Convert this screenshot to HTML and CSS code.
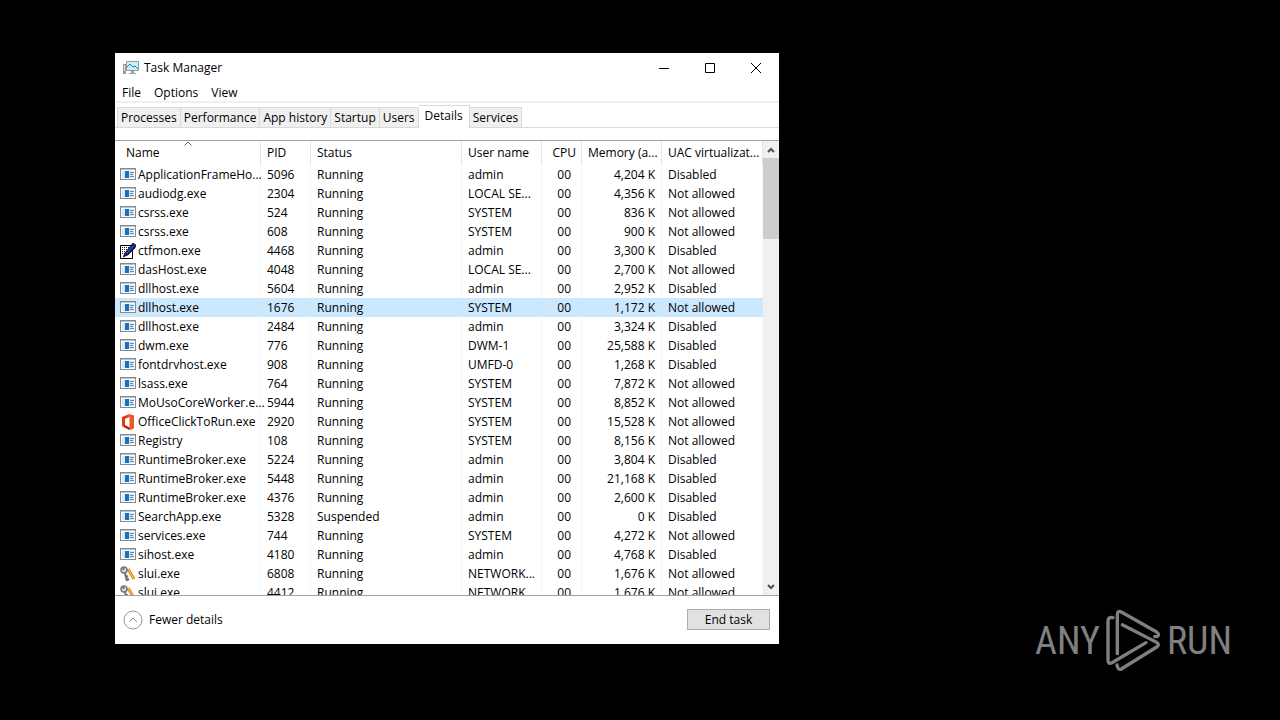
FILE: index.html
```
<!DOCTYPE html>
<html lang="en">
<head>
    <meta charset="UTF-8">
    <meta name="viewport" content="width=device-width, initial-scale=1.0">
    <title>Task Manager</title>
    <link rel="stylesheet" href="styles.css">
</head>
<body>

    <!-- process icons -->
    <svg class="sprite" aria-hidden="true">
        <symbol id="exe" viewBox="0 0 16 12">
            <path fill="#808a8f" d="M0 0h16v12H0z"/>
            <path fill="#fff" d="M1 2h14v9H1z"/>
            <path fill="#b9c3c8" d="M1 1h14v1H1z"/>
            <path fill="#dfe7ec" d="M2 3h12v7H2z"/>
            <path fill="#1a6fc0" d="M5 3h4v7H5z"/>
            <path stroke="#4b93cf" d="M10 4.500h4M10 6.500h3M10 8.500h4"/>
        </symbol>
        <symbol id="pen" viewBox="0 0 16 16">
            <path fill="#fff" stroke="#000" d="M.5 2.500h12v13H.5z"/>
            <path stroke="#222" stroke-dasharray="1 1" d="M2 4.500h9M2 6.500h8M2 8.500h6M2 10.500h4"/>
            <path fill="#0c1a72" stroke="#000" stroke-width=".6" d="M13 0l3 2-1 3-7 7-5 2 2-4z"/>
            <path stroke="#4d74d8" d="M6.500 10.500l7-8"/>
        </symbol>
        <symbol id="office" viewBox="0 0 16 16">
            <path fill="#e43a12" d="M9.500 0L2 3v9l3-1V4.700L9.500 3z"/>
            <path fill="#b81d14" d="M2 12l7.500 4v-2.500L5 11z"/>
            <path fill="#f0562a" d="M9.500 0L14 1.500v13L9.500 16z"/>
            <path fill="#c9260f" d="M2 12l7.500 1.500V16z"/>
        </symbol>
        <symbol id="keys" viewBox="0 0 16 16">
            <path fill="none" stroke="#d18a1c" stroke-width="3" d="M8 3l6 10"/>
            <path fill="none" stroke="#f6c763" d="M8 3l6 10"/>
            <circle cx="4" cy="4" r="3" fill="#ddd" stroke="#777" stroke-width="1.500"/>
            <circle cx="3.500" cy="3" r="1" fill="#555"/>
            <path fill="none" stroke="#6d6d72" stroke-width="2" d="M5 7l2 8M6 11l2-1M7 14l2-1"/>
        </symbol>
    </svg>

    <main class="window">
        <header class="titlebar">
            <svg class="app-icon" viewBox="0 0 16 14" aria-hidden="true">
                <path fill="#9a9a9a" d="M0 3h3v10H0z"/>
                <path fill="#ddd" d="M1 4h1v6H1z"/>
                <path fill="#d3ecfa" stroke="#8c9aa3" d="M3.500.5h12v9h-12z"/>
                <path fill="none" stroke="#1783c4" d="M4 6l3-3 3 3 2-1 3 3"/>
                <path fill="#9aa4aa" d="M8 10h3v2h2v1H6v-1h2z"/>
            </svg>
            <h1 class="title">Task Manager</h1>
            <button class="win-btn" aria-label="Minimize"><svg viewBox="0 0 12 12"><path d="M1 6.500h10"/></svg></button>
            <button class="win-btn" aria-label="Maximize"><svg viewBox="0 0 12 12"><path d="M1.500 1.500h9v9h-9z"/></svg></button>
            <button class="win-btn" aria-label="Close"><svg viewBox="0 0 12 12"><path d="M1 1l10 10M11 1L1 11"/></svg></button>
        </header>

        <nav class="menu">
            <button>File</button>
            <button>Options</button>
            <button>View</button>
        </nav>

        <div class="tabs" role="tablist">
            <button class="tab" role="tab">Processes</button>
            <button class="tab" role="tab">Performance</button>
            <button class="tab" role="tab">App history</button>
            <button class="tab" role="tab">Startup</button>
            <button class="tab" role="tab">Users</button>
            <button class="tab active" role="tab" aria-selected="true">Details</button>
            <button class="tab" role="tab">Services</button>
        </div>

        <section class="list">
            <table class="processes">
                <colgroup>
                    <col class="c-name">
                    <col class="c-pid">
                    <col class="c-status">
                    <col class="c-user">
                    <col class="c-cpu">
                    <col class="c-mem">
                    <col>
                </colgroup>
                <thead>
                    <tr>
                        <th class="sorted">Name<svg class="sort" viewBox="0 0 8 5" aria-hidden="true"><path d="M.5 4.500L4 1l3.500 3.500"/></svg></th>
                        <th>PID</th>
                        <th>Status</th>
                        <th>User name</th>
                        <th class="num">CPU</th>
                        <th class="num">Memory (a...</th>
                        <th>UAC virtualizat...</th>
                    </tr>
                </thead>
                <tbody>
                    <tr><td><svg><use href="#exe"/></svg>ApplicationFrameHo...</td><td>5096</td><td>Running</td><td>admin</td><td class="cpu">00</td><td class="num">4,204 K</td><td>Disabled</td></tr>
                    <tr><td><svg><use href="#exe"/></svg>audiodg.exe</td><td>2304</td><td>Running</td><td>LOCAL SE...</td><td class="cpu">00</td><td class="num">4,356 K</td><td>Not allowed</td></tr>
                    <tr><td><svg><use href="#exe"/></svg>csrss.exe</td><td>524</td><td>Running</td><td>SYSTEM</td><td class="cpu">00</td><td class="num">836 K</td><td>Not allowed</td></tr>
                    <tr><td><svg><use href="#exe"/></svg>csrss.exe</td><td>608</td><td>Running</td><td>SYSTEM</td><td class="cpu">00</td><td class="num">900 K</td><td>Not allowed</td></tr>
                    <tr><td><svg class="big"><use href="#pen"/></svg>ctfmon.exe</td><td>4468</td><td>Running</td><td>admin</td><td class="cpu">00</td><td class="num">3,300 K</td><td>Disabled</td></tr>
                    <tr><td><svg><use href="#exe"/></svg>dasHost.exe</td><td>4048</td><td>Running</td><td>LOCAL SE...</td><td class="cpu">00</td><td class="num">2,700 K</td><td>Not allowed</td></tr>
                    <tr><td><svg><use href="#exe"/></svg>dllhost.exe</td><td>5604</td><td>Running</td><td>admin</td><td class="cpu">00</td><td class="num">2,952 K</td><td>Disabled</td></tr>
                    <tr class="selected"><td><svg><use href="#exe"/></svg>dllhost.exe</td><td>1676</td><td>Running</td><td>SYSTEM</td><td class="cpu">00</td><td class="num">1,172 K</td><td>Not allowed</td></tr>
                    <tr><td><svg><use href="#exe"/></svg>dllhost.exe</td><td>2484</td><td>Running</td><td>admin</td><td class="cpu">00</td><td class="num">3,324 K</td><td>Disabled</td></tr>
                    <tr><td><svg><use href="#exe"/></svg>dwm.exe</td><td>776</td><td>Running</td><td>DWM-1</td><td class="cpu">00</td><td class="num">25,588 K</td><td>Disabled</td></tr>
                    <tr><td><svg><use href="#exe"/></svg>fontdrvhost.exe</td><td>908</td><td>Running</td><td>UMFD-0</td><td class="cpu">00</td><td class="num">1,268 K</td><td>Disabled</td></tr>
                    <tr><td><svg><use href="#exe"/></svg>lsass.exe</td><td>764</td><td>Running</td><td>SYSTEM</td><td class="cpu">00</td><td class="num">7,872 K</td><td>Not allowed</td></tr>
                    <tr><td><svg><use href="#exe"/></svg>MoUsoCoreWorker.e...</td><td>5944</td><td>Running</td><td>SYSTEM</td><td class="cpu">00</td><td class="num">8,852 K</td><td>Not allowed</td></tr>
                    <tr><td><svg class="big"><use href="#office"/></svg>OfficeClickToRun.exe</td><td>2920</td><td>Running</td><td>SYSTEM</td><td class="cpu">00</td><td class="num">15,528 K</td><td>Not allowed</td></tr>
                    <tr><td><svg><use href="#exe"/></svg>Registry</td><td>108</td><td>Running</td><td>SYSTEM</td><td class="cpu">00</td><td class="num">8,156 K</td><td>Not allowed</td></tr>
                    <tr><td><svg><use href="#exe"/></svg>RuntimeBroker.exe</td><td>5224</td><td>Running</td><td>admin</td><td class="cpu">00</td><td class="num">3,804 K</td><td>Disabled</td></tr>
                    <tr><td><svg><use href="#exe"/></svg>RuntimeBroker.exe</td><td>5448</td><td>Running</td><td>admin</td><td class="cpu">00</td><td class="num">21,168 K</td><td>Disabled</td></tr>
                    <tr><td><svg><use href="#exe"/></svg>RuntimeBroker.exe</td><td>4376</td><td>Running</td><td>admin</td><td class="cpu">00</td><td class="num">2,600 K</td><td>Disabled</td></tr>
                    <tr><td><svg><use href="#exe"/></svg>SearchApp.exe</td><td>5328</td><td>Suspended</td><td>admin</td><td class="cpu">00</td><td class="num">0 K</td><td>Disabled</td></tr>
                    <tr><td><svg><use href="#exe"/></svg>services.exe</td><td>744</td><td>Running</td><td>SYSTEM</td><td class="cpu">00</td><td class="num">4,272 K</td><td>Not allowed</td></tr>
                    <tr><td><svg><use href="#exe"/></svg>sihost.exe</td><td>4180</td><td>Running</td><td>admin</td><td class="cpu">00</td><td class="num">4,768 K</td><td>Disabled</td></tr>
                    <tr><td><svg class="big"><use href="#keys"/></svg>slui.exe</td><td>6808</td><td>Running</td><td>NETWORK...</td><td class="cpu">00</td><td class="num">1,676 K</td><td>Not allowed</td></tr>
                    <tr><td><svg class="big"><use href="#keys"/></svg>slui.exe</td><td>4412</td><td>Running</td><td>NETWORK...</td><td class="cpu">00</td><td class="num">1,676 K</td><td>Not allowed</td></tr>
                </tbody>
            </table>
            <div class="scrollbar">
                <button aria-label="Scroll up"><svg viewBox="0 0 8 6"><path d="M1 5l3-3 3 3"/></svg></button>
                <div class="thumb"></div>
                <button aria-label="Scroll down"><svg viewBox="0 0 8 6"><path d="M1 1l3 3 3-3"/></svg></button>
            </div>
        </section>

        <footer class="bottom">
            <button class="fewer">
                <svg viewBox="0 0 20 20" aria-hidden="true"><circle cx="10" cy="10" r="9"/><path d="M6 12l4-4 4 4"/></svg>
                Fewer details
            </button>
            <button class="end-task">End task</button>
        </footer>
    </main>

    <div class="watermark">
        <span>ANY</span>
        <svg viewBox="270 28 165 189" aria-hidden="true">
            <path d="M291 54q-15-3-15 10v117q0 14 12 8l102-60"/>
            <path d="M304 162V45q0-14 12-8l106 60q10 7 2 13l-8 1"/>
            <path d="M319 75l103 53q10 7 0 14l-106 66q-10 5-13-12"/>
        </svg>
        <span>RUN</span>
    </div>

</body>
</html>
```
FILE: styles.css
```
*{
    box-sizing: border-box;
    margin: 0;
    padding: 0;
}
body{
    position: relative;
    min-height: 100vh;
    background-color: #000;
    font-family: "Open Sans", "Noto Sans", sans-serif;
    font-size: 12px;
    line-height: 16px;
    color: #000;
}
button{
    border: none;
    background: none;
    font: inherit;
    color: inherit;
}
svg{
    display: block;
}
.sprite{
    position: absolute;
    width: 0;
    height: 0;
}

/* window */
.window{
    position: absolute;
    top: 53px;
    left: 115px;
    display: flex;
    flex-direction: column;
    width: 664px;
    height: 591px;
    background-color: #fff;
}
.titlebar{
    display: flex;
    align-items: center;
    height: 30px;
    padding-left: 8px;
}
.app-icon{
    width: 16px;
    height: 14px;
}
.title{
    flex: 1;
    padding-left: 5px;
    font-size: 12px;
    font-weight: 400;
}
.win-btn{
    width: 46px;
    height: 28px;
    padding-left: 17px;
}
.win-btn svg{
    width: 12px;
    height: 12px;
    fill: none;
    stroke: #000;
}
.menu{
    display: flex;
    gap: 13px;
    height: 20px;
    padding: 2px 7px;
    border-bottom: 2px solid #f0f0f0;
}

/* tabs */
.tabs{
    display: flex;
    align-items: flex-end;
    height: 25px;
    padding-left: 2px;
    border-bottom: 1px solid #d9d9d9;
}
.tab{
    height: 20px;
    padding: 0 3px;
    border: 1px solid #d9d9d9;
    border-left-width: 0;
    border-bottom: none;
    background-color: #f0f0f0;
}
.tab:first-child{
    border-left-width: 1px;
}
.tab.active{
    height: 23px;
    margin-bottom: -1px;
    padding: 0 6px 3px;
    background-color: #fff;
}

/* process list */
.list{
    display: flex;
    flex: 1;
    min-height: 0;
    margin-top: 12px;
    border-top: 1px solid #a0a0a0;
    border-bottom: 1px solid #a0a0a0;
    overflow: hidden;
}
.processes{
    flex: 1;
    align-self: flex-start;
    table-layout: fixed;
    width: 100%;
    border-collapse: separate;
    border-spacing: 0;
    white-space: nowrap;
}
.c-name{ width: 146px; }
.c-pid{ width: 50px; }
.c-status{ width: 151px; }
.c-user{ width: 80px; }
.c-cpu{ width: 40px; }
.c-mem{ width: 80px; }
th{
    height: 24px;
    padding: 0 5px 0 6px;
    border-right: 1px solid #e5e5e5;
    font-weight: 400;
    text-align: left;
}
td{
    height: 19px;
    padding: 0 6px;
    border-right: 1px solid #f3f8fc;
}
th.sorted{
    position: relative;
    padding-left: 11px;
}
.sort{
    position: absolute;
    top: 0;
    left: 69px;
    width: 8px;
    height: 5px;
    fill: none;
    stroke: #666;
}
td:first-child{
    padding: 0 0 0 5px;
}
td svg{
    display: inline-block;
    width: 16px;
    height: 12px;
    margin-right: 2px;
    vertical-align: -1px;
}
td svg.big{
    height: 16px;
    margin: -2px 2px -2px 0;
    vertical-align: -2px;
}
.num{
    text-align: right;
}
td.cpu{
    padding-right: 10px;
    text-align: right;
}
.selected td{
    border-color: #cce8ff;
    background-color: #cce8ff;
}
.scrollbar{
    display: flex;
    flex-direction: column;
    width: 16px;
    background-color: #f0f0f0;
}
.scrollbar button{
    display: flex;
    align-items: center;
    justify-content: center;
    height: 17px;
}
.scrollbar svg{
    width: 8px;
    height: 6px;
    fill: none;
    stroke: #505050;
    stroke-width: 2;
}
.thumb{
    height: 81px;
    margin-bottom: auto;
    background-color: #cdcdcd;
}

/* footer */
.bottom{
    display: flex;
    align-items: center;
    justify-content: space-between;
    height: 48px;
    padding: 0 9px 1px 8px;
}
.fewer{
    display: flex;
    align-items: center;
    gap: 6px;
}
.fewer svg{
    width: 20px;
    height: 20px;
    fill: none;
    stroke: #999;
}
.end-task{
    width: 83px;
    height: 21px;
    border: 1px solid #adadad;
    background-color: #e1e1e1;
}

/* watermark */
.watermark{
    position: absolute;
    right: 48px;
    bottom: 48px;
    display: flex;
    align-items: center;
    gap: 6px;
    font-family: "Roboto Condensed", "Liberation Sans Narrow", "Liberation Sans", sans-serif;
    font-size: 38px;
    line-height: 40px;
    color: #808080;
}
.watermark svg{
    width: 55px;
    height: 63px;
    fill: none;
    stroke: #808080;
    stroke-width: 10;
    stroke-linecap: round;
}
```
